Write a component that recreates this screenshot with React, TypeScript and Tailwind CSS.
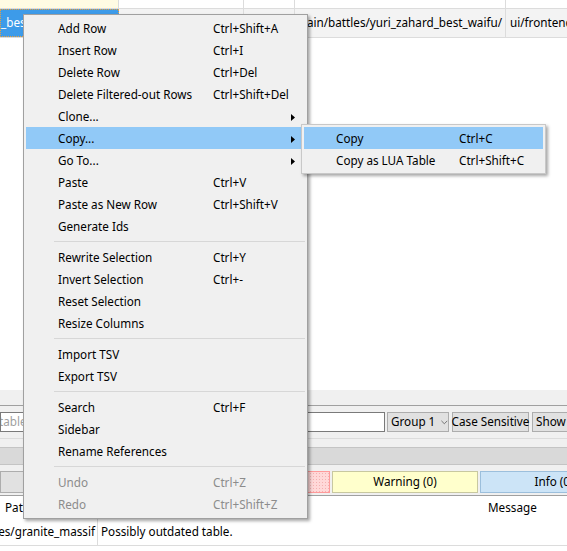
const font = "font-['Noto_Sans',sans-serif]"

type Item =
  | { sep: true }
  | { sep?: false; label: string; shortcut?: string; arrow?: boolean; active?: boolean; disabled?: boolean }

const items: Item[] = [
  { label: 'Add Row', shortcut: 'Ctrl+Shift+A' },
  { label: 'Insert Row', shortcut: 'Ctrl+I' },
  { label: 'Delete Row', shortcut: 'Ctrl+Del' },
  { label: 'Delete Filtered-out Rows', shortcut: 'Ctrl+Shift+Del' },
  { label: 'Clone...', arrow: true },
  { label: 'Copy...', arrow: true, active: true },
  { label: 'Go To...', arrow: true },
  { label: 'Paste', shortcut: 'Ctrl+V' },
  { label: 'Paste as New Row', shortcut: 'Ctrl+Shift+V' },
  { label: 'Generate Ids' },
  { sep: true },
  { label: 'Rewrite Selection', shortcut: 'Ctrl+Y' },
  { label: 'Invert Selection', shortcut: 'Ctrl+-' },
  { label: 'Reset Selection' },
  { label: 'Resize Columns' },
  { sep: true },
  { label: 'Import TSV' },
  { label: 'Export TSV' },
  { sep: true },
  { label: 'Search', shortcut: 'Ctrl+F' },
  { label: 'Sidebar' },
  { label: 'Rename References' },
  { sep: true },
  { label: 'Undo', shortcut: 'Ctrl+Z', disabled: true },
  { label: 'Redo', shortcut: 'Ctrl+Shift+Z', disabled: true },
]

function Arrow() {
  return (
    <svg width="4" height="7" viewBox="0 0 4 7" className="block">
      <polygon points="0,0 4,3.5 0,7" fill="#000" />
    </svg>
  )
}

function ContextMenu() {
  return (
    <div className="absolute left-[23px] top-[14px] w-[285px] bg-[#f0f0f0] border border-[#a0a0a0] pt-[2px] pb-[3px] px-[2px] shadow-[2px_2px_3px_rgba(0,0,0,0.35)]">
      {items.map((it, i) =>
        it.sep ? (
          <div key={i} className="h-[9px] flex items-center pl-[28px]">
            <div className="h-px w-full bg-[#d7d7d7]" />
          </div>
        ) : (
          <div
            key={i}
            className={`h-[22px] pt-[2px] flex items-center ${it.active ? 'bg-[#91c9f7]' : ''} ${it.disabled ? 'text-[#8c8c8c]' : 'text-black'}`}
          >
            <span className="w-[187px] pl-[32px] whitespace-nowrap">{it.label}</span>
            <span className="flex-1 whitespace-nowrap">{it.shortcut}</span>
            <span className="w-[14px] flex justify-start">{it.arrow && <Arrow />}</span>
          </div>
        )
      )}
    </div>
  )
}

function SubMenu() {
  return (
    <div className="absolute left-[301px] top-[124px] w-[245px] bg-[#f0f0f0] border border-[#c8c8c8] p-[2px] shadow-[2px_2px_3px_rgba(0,0,0,0.35)]">
      <div className="h-[22px] pt-[2px] flex items-center bg-[#91c9f7]">
        <span className="w-[155px] pl-[32px]">Copy</span>
        <span>Ctrl+C</span>
      </div>
      <div className="h-[22px] pt-[2px] flex items-center">
        <span className="w-[155px] pl-[32px] whitespace-nowrap">Copy as LUA Table</span>
        <span className="whitespace-nowrap">Ctrl+Shift+C</span>
      </div>
    </div>
  )
}

export default function App() {
  return (
    <div className={`relative w-[567px] h-[551px] overflow-hidden bg-white flex flex-col text-[11.7px] leading-none ${font}`}>
      {/* table rows */}
      <div className="h-[9px] flex border-b border-[#dcdcdc] shrink-0">
        <div className="w-[119px] bg-[#fffbe3] border-r border-[#dcdcdc]" />
        <div className="w-[125px] border-r border-[#dcdcdc]" />
        <div className="w-[51px] border-r border-[#dcdcdc]" />
        <div className="w-[211px] border-r border-[#dcdcdc]" />
        <div className="flex-1" />
      </div>
      <div className="h-[29px] flex border-b border-[#dcdcdc] bg-[#f3f3f3] shrink-0">
        <div className="w-[119px] bg-[#3d9be9] border border-dotted border-[#e8a040] flex items-center overflow-hidden text-white whitespace-nowrap">
          <span>_best_waifu</span>
        </div>
        <div className="w-[125px] border-r border-[#dcdcdc]" />
        <div className="w-[51px] border-r border-[#dcdcdc]" />
        <div className="w-[211px] border-r border-[#dcdcdc] flex items-center justify-end pr-[3px] overflow-hidden whitespace-nowrap">
          terrain/battles/yuri_zahard_best_waifu/
        </div>
        <div className="flex-1 flex items-center pl-[4px] overflow-hidden whitespace-nowrap">ui/frontend_ui/</div>
      </div>

      <div className="flex-1" />

      {/* bottom panel */}
      <div className="h-[16px] bg-[#f0f0f0] border-b border-[#a0a0a0] shrink-0" />
      <div className="h-[33px] bg-[#f0f0f0] flex items-center gap-[2px] shrink-0 border-b border-[#dcdcdc] overflow-hidden">
        <div className="w-[385px] shrink-0 h-[20px] bg-white border border-[#7a7a7a] flex items-center overflow-hidden whitespace-nowrap text-[#a0a0a0]">
          <span className="ml-[-2px]">tables</span>
        </div>
        <div className="w-[62px] shrink-0 h-[20px] bg-[#e1e1e1] border border-[#adadad] flex items-center pl-[3px] gap-[6px] whitespace-nowrap">
          <span>Group 1</span>
          <svg width="8" height="5" viewBox="0 0 8 5"><polyline points="0.5,0.5 4,4 7.5,0.5" fill="none" stroke="#606060" strokeWidth="1" /></svg>
        </div>
        <div className="ml-[1px] w-[77px] shrink-0 h-[20px] bg-[#e1e1e1] border border-[#adadad] flex items-center justify-center whitespace-nowrap">Case Sensitive</div>
        <div className="ml-[1px] w-[80px] shrink-0 h-[20px] bg-[#e1e1e1] border border-[#adadad] flex items-center pl-[3px] whitespace-nowrap">Show Blank</div>
      </div>
      <div className="h-[8px] bg-[#f0f0f0] shrink-0" />
      <div className="h-[18px] bg-[#d9d9d9] border-y border-[#c4c4c4] shrink-0" />
      <div className="h-[6px] bg-[#f0f0f0] shrink-0" />
      <div className="h-[25px] bg-[#f0f0f0] flex gap-[2px] shrink-0 border-b border-[#a0a0a0] pb-[2px] overflow-hidden">
        <div className="w-[150px] shrink-0 bg-[#e1e1e1] border border-[#adadad]" />
        <div className="w-[178px] shrink-0 bg-[#ffd8d8] border border-[#ff9a9a] bg-[radial-gradient(#f4b0b0_0.6px,transparent_0.7px)] bg-[length:3px_3px]" />
        <div className="w-[146px] shrink-0 bg-[#ffffcc] border border-[#c8c8a0] flex items-center justify-center">Warning (0)</div>
        <div className="w-[148px] shrink-0 bg-[#cce4f7] border border-[#9cbfdc] flex items-center justify-center whitespace-nowrap">Info (0)</div>
      </div>
      <div className="h-[23px] flex items-center shrink-0">
        <span className="w-[488px] pl-[5px]">Path</span>
        <span>Message</span>
      </div>
      <div className="h-[27px] flex border-b border-[#dcdcdc] shrink-0">
        <div className="w-[98px] border-r border-[#dcdcdc] flex items-center justify-end pr-[2px] overflow-hidden whitespace-nowrap">
          db/tables/granite_massif
        </div>
        <div className="flex items-center pl-[3px]">Possibly outdated table.</div>
      </div>
      <div className="h-[5px] shrink-0" />

      <ContextMenu />
      <SubMenu />
    </div>
  )
}
